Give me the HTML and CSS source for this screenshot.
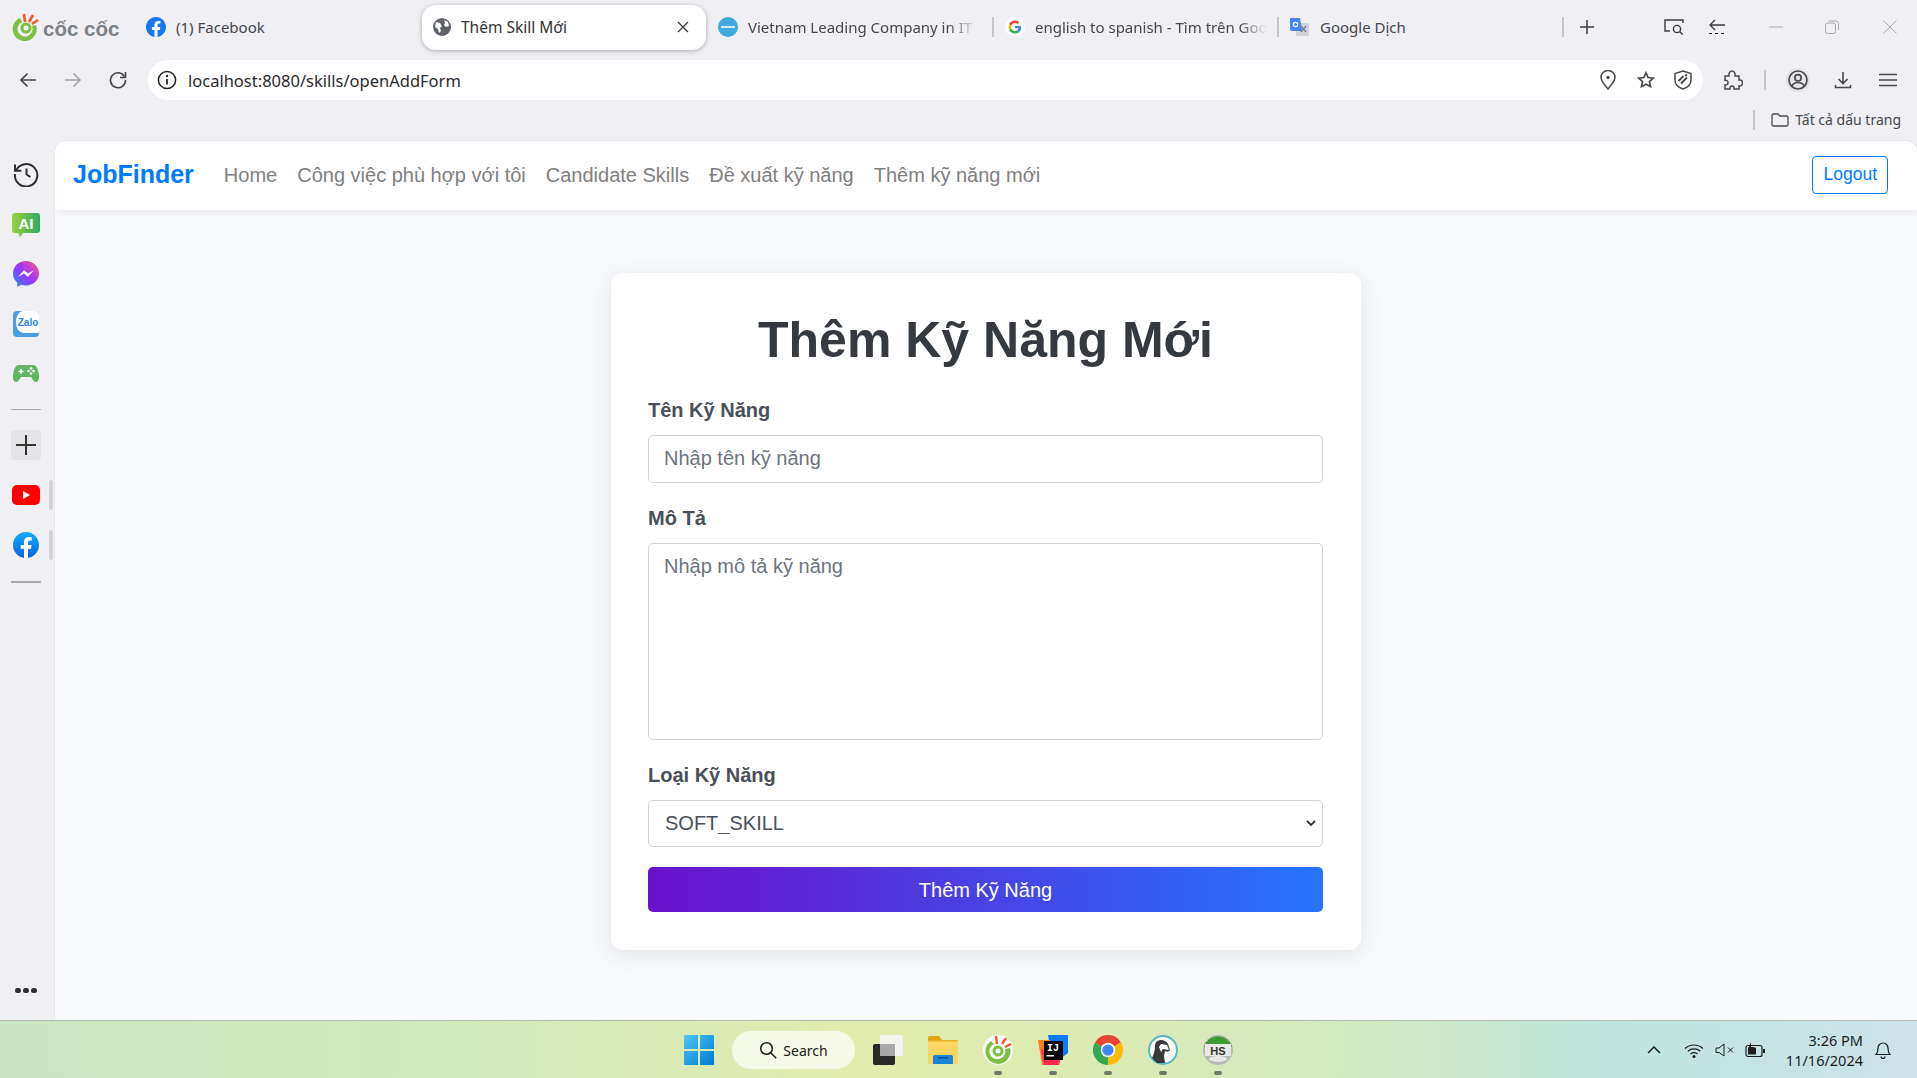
FILE: index.html
```html
<!DOCTYPE html>
<html lang="vi">
<head>
<meta charset="utf-8">
<title>Thêm Skill Mới</title>
<link rel="stylesheet" href="styles.css">
</head>
<body>
<div class="browser">
  <header class="tabstrip">
    <div class="brand">
      <svg width="28" height="28" viewBox="0 0 28 28"><path d="M8 5A12 12 0 1 0 24 12L20 13A7.6 7.6 0 1 1 10 9Z" fill="#7cc142"/><circle cx="14" cy="15" r="4" fill="none" stroke="#7cc142" stroke-width="3"/><path d="M13 9L12 1M17 9l4-7M20 11l6-4" stroke="#f4572a" stroke-width="2.6" fill="none"/></svg>
      <span class="brand-name">cốc cốc</span>
    </div>
    <div class="tab tab-fb">
      <svg width="20" height="20" viewBox="0 0 24 24"><circle cx="12" cy="12" r="11" fill="#fff"/><path fill="#1877f2" d="M24 12.07C24 5.4 18.63 0 12 0S0 5.4 0 12.07c0 6.03 4.39 11.02 10.13 11.93v-8.44H7.08v-3.49h3.05V9.41c0-3.02 1.79-4.69 4.53-4.69 1.31 0 2.69.24 2.69.24v2.97h-1.52c-1.49 0-1.96.93-1.96 1.89v2.25h3.33l-.53 3.49h-2.8V24C19.61 23.09 24 18.1 24 12.07z"/></svg>
      <span class="tab-title">(1) Facebook</span>
    </div>
    <div class="tab tab-active">
      <svg width="18" height="18" viewBox="0 0 18 18"><circle cx="9" cy="9" r="9" fill="#5f6368"/><path d="M3 4l4 1 2 3-2 2 1 3-2 2-1-4-3-2ZM11 2l4 2 1 4-3 1-2-2 1-2Z" fill="#fff"/></svg>
      <span class="tab-title tab-title-active">Thêm Skill Mới</span>
      <svg class="tab-x" width="12" height="12" viewBox="0 0 12 12"><path d="M1 1l10 10M11 1L1 11" stroke="#333" stroke-width="1.2"/></svg>
    </div>
    <div class="tab tab-vn">
      <svg width="20" height="20" viewBox="0 0 20 20"><circle cx="10" cy="10" r="10" fill="#3fa9e0"/><rect x="3" y="9" width="14" height="2" fill="#cfe8f6"/></svg>
      <span class="tab-title tab-fade tab-title-vn">Vietnam Leading Company in IT</span>
    </div>
    <i class="tab-sep"></i>
    <div class="tab tab-g">
      <svg width="20" height="20" viewBox="0 0 20 20"><circle cx="10" cy="10" r="10" fill="#fff"/><g transform="translate(3.5 3.5) scale(.27)"><path fill="#EA4335" d="M24 9.5c3.54 0 6.71 1.22 9.21 3.6l6.85-6.85C35.9 2.38 30.47 0 24 0 14.62 0 6.51 5.38 2.56 13.22l7.98 6.19C12.43 13.72 17.74 9.5 24 9.5z"/><path fill="#4285F4" d="M46.98 24.55c0-1.57-.15-3.09-.38-4.55H24v9.02h12.94c-.58 2.96-2.26 5.48-4.78 7.18l7.73 6c4.51-4.18 7.09-10.36 7.09-17.65z"/><path fill="#FBBC05" d="M10.53 28.59c-.48-1.45-.76-2.99-.76-4.59s.27-3.14.76-4.59l-7.98-6.19C.92 16.46 0 20.12 0 24c0 3.88.92 7.54 2.56 10.78l7.97-6.19z"/><path fill="#34A853" d="M24 48c6.48 0 11.93-2.13 15.89-5.81l-7.73-6c-2.15 1.45-4.92 2.3-8.16 2.3-6.26 0-11.57-4.22-13.47-9.91l-7.98 6.19C6.51 42.62 14.62 48 24 48z"/></g></svg>
      <span class="tab-title tab-fade tab-title-g">english to spanish - Tìm trên Google</span>
    </div>
    <i class="tab-sep"></i>
    <div class="tab tab-tr">
      <svg width="20" height="20" viewBox="0 0 20 20"><rect x="7" y="6" width="13" height="13" rx="1" fill="#d0d3d8"/><path d="M1 1h10l2 13H3a2 2 0 0 1-2-2Z" fill="#4285f4"/><path d="M12 9l5 6M17 9l-5 6" stroke="#7a7f85" stroke-width="1.2"/><circle cx="6.5" cy="7.5" r="2.2" fill="none" stroke="#fff" stroke-width="1.2"/></svg>
      <span class="tab-title">Google Dịch</span>
    </div>
    <i class="tab-sep tab-sep-end"></i>
    <svg class="plus" width="16" height="16" viewBox="0 0 16 16"><path d="M8 1v14M1 8h14" stroke="#3c3c3c" stroke-width="1.5"/></svg>
    <svg class="strip-search" width="20" height="16" viewBox="0 0 20 16"><path d="M6 12H1V1h18v3" fill="none" stroke="#3c3c3c" stroke-width="1.4"/><circle cx="13" cy="10" r="3.6" fill="none" stroke="#3c3c3c" stroke-width="1.4"/><path d="M15.6 12.6l3 3" stroke="#3c3c3c" stroke-width="1.4"/></svg>
    <svg class="strip-back" width="18" height="16" viewBox="0 0 18 16"><path d="M17 6H2M7 1L2 6l5 5" fill="none" stroke="#3c3c3c" stroke-width="1.3"/><path d="M1 14.500h16" stroke="#222" stroke-width="1.2" stroke-dasharray="3 3"/></svg>
    <svg class="win-min" width="14" height="2" viewBox="0 0 14 2"><path d="M0 1h14" stroke="#a8a8ad" stroke-width="1"/></svg>
    <svg class="win-max" width="14" height="14" viewBox="0 0 14 14"><rect x=".5" y="3" width="10" height="10.500" rx="2" fill="none" stroke="#a8a8ad"/><path d="M3.500 1H11a2.500 2.500 0 0 1 2.500 2.500V10" fill="none" stroke="#a8a8ad"/></svg>
    <svg class="win-close" width="14" height="14" viewBox="0 0 14 14"><path d="M.5.500l13 13M13.500.500l-13 13" stroke="#a8a8ad"/></svg>
  </header>

  <div class="toolbar">
    <svg class="nav-back" width="18" height="16" viewBox="0 0 18 16"><path d="M17 8H2M8.500 1.500L2 8l6.500 6.500" fill="none" stroke="#444" stroke-width="1.6"/></svg>
    <svg class="nav-fwd" width="18" height="16" viewBox="0 0 18 16"><path d="M1 8h15M9.500 1.500L16 8l-6.500 6.500" fill="none" stroke="#a2a2a6" stroke-width="1.6"/></svg>
    <svg class="nav-reload" width="18" height="18" viewBox="0 0 18 18"><path d="M15.500 5.500A7.500 7.500 0 1 0 16.500 9" fill="none" stroke="#444" stroke-width="1.6"/><path d="M16.500 1v5.500H11" fill="none" stroke="#444" stroke-width="1.6"/></svg>
    <div class="omnibox">
      <svg width="20" height="20" viewBox="0 0 20 20"><circle cx="10" cy="10" r="8.600" fill="none" stroke="#222" stroke-width="1.5"/><path d="M10 9v5.500" stroke="#222" stroke-width="1.800"/><circle cx="10" cy="6" r="1.200" fill="#222"/></svg>
      <span class="url">localhost:8080/skills/openAddForm</span>
      <svg class="omni-pin" width="16" height="20" viewBox="0 0 16 20"><path d="M8 19C4 14 1 11 1 7.500a7 7 0 0 1 14 0C15 11 12 14 8 19Z" fill="none" stroke="#4a4a4e" stroke-width="1.500"/><circle cx="8" cy="7.500" r="1.700" fill="#4a4a4e"/></svg>
      <svg class="omni-star" width="18" height="18" viewBox="0 0 18 18"><path d="M9 1.800l2.200 4.700 5.100.6-3.800 3.500 1 5.100L9 13.200l-4.500 2.500 1-5.100L1.700 7.100l5.100-.6Z" fill="none" stroke="#4a4a4e" stroke-width="1.700"/></svg>
      <svg class="omni-shield" width="18" height="20" viewBox="0 0 18 20"><path d="M9 1l8 2.500V10c0 4.500-3.500 7.500-8 9-4.500-1.500-8-4.500-8-9V3.500Z" fill="none" stroke="#4a4a4e" stroke-width="1.500"/><path d="M4.500 11l5-5M7 13.500l6-6M11 6l2-1.500" stroke="#4a4a4e" stroke-width="2"/></svg>
    </div>
    <svg class="tool-puzzle" width="20" height="20" viewBox="0 0 20 20"><path d="M2 6h4c-.5-3 1-5 3-5s3.500 2 3 5h4v4c3-.5 3.500 1.500 3.500 3s-1 3.500-3.500 3v3H11c.3-2-.6-3-2-3s-2.300 1-2 3H2v-4c2 .3 3-1 3-2.500S4 10 2 10.300Z" fill="none" stroke="#4a4a4e" stroke-width="1.500"/></svg>
    <i class="tool-sep"></i>
    <span class="tool-profile"><svg width="20" height="20" viewBox="0 0 20 20"><circle cx="10" cy="10" r="9" fill="none" stroke="#4a4a4e" stroke-width="1.700"/><circle cx="10" cy="7.800" r="3.200" fill="none" stroke="#4a4a4e" stroke-width="1.700"/><path d="M3.800 16c1.200-2.500 3.500-3.500 6.200-3.500s5 1 6.200 3.500" fill="none" stroke="#4a4a4e" stroke-width="1.700"/></svg></span>
    <svg class="tool-dl" width="18" height="18" viewBox="0 0 18 18"><path d="M9 1v11M4.500 8L9 12.500 13.500 8" fill="none" stroke="#4a4a4e" stroke-width="1.600"/><path d="M1.500 14v2.500h15V14" fill="none" stroke="#4a4a4e" stroke-width="1.600"/></svg>
    <svg class="tool-menu" width="18" height="14" viewBox="0 0 18 14"><path d="M0 1.500h18M0 7h18M0 12.500h18" stroke="#4a4a4e" stroke-width="1.600"/></svg>
  </div>

  <div class="bookmarks">
    <i class="bm-sep"></i>
    <svg width="18" height="14" viewBox="0 0 18 14"><path d="M1 2.500A1.500 1.500 0 0 1 2.500 1H7l2 2h6.500A1.500 1.500 0 0 1 17 4.500v7a1.500 1.500 0 0 1-1.500 1.500h-13A1.500 1.500 0 0 1 1 11.500Z" fill="none" stroke="#4a4a4e" stroke-width="1.300"/></svg>
    <span class="bm-text">Tất cả dấu trang</span>
  </div>

  <div class="workspace">
    <aside class="rail">
      <svg class="rail-history" width="26" height="26" viewBox="0 0 26 26"><path d="M3 9.500A11.200 11.200 0 1 1 2 13" fill="none" stroke="#2f2f2f" stroke-width="2"/><path d="M2 3.500v6.300h6.300" fill="none" stroke="#2f2f2f" stroke-width="2"/><path d="M13.500 7.500v6l4 2.500" fill="none" stroke="#2f2f2f" stroke-width="2"/></svg>
      <svg class="rail-ai" width="28" height="26" viewBox="0 0 28 26"><defs><linearGradient id="ai" x1="0" x2="1"><stop offset="0" stop-color="#9ccf3f"/><stop offset="1" stop-color="#30a864"/></linearGradient></defs><path d="M3 1h22a3 3 0 0 1 3 3v14a3 3 0 0 1-3 3H11l-3 4-2-4H3a3 3 0 0 1-3-3V4a3 3 0 0 1 3-3Z" fill="url(#ai)"/><text x="14" y="16.500" class="ai-text">AI</text></svg>
      <svg class="rail-msg" width="26" height="26" viewBox="0 0 26 26"><defs><linearGradient id="ms" x1="0" y1="1" x2="1" y2="0"><stop offset="0" stop-color="#1f8bff"/><stop offset=".5" stop-color="#a033ff"/><stop offset="1" stop-color="#ff5c7a"/></linearGradient></defs><path d="M13 0C5.800 0 0 5.400 0 12.500c0 3.800 1.600 7 4.300 9.200V26l4-2.200c1.500.4 3 .7 4.700.7 7.200 0 13-5.400 13-12S20.200 0 13 0Z" fill="url(#ms)"/><path d="M5 16l6-7 4 3.500 6-3.500-6 7-4-3.500Z" fill="#fff"/></svg>
      <svg class="rail-zalo" width="26" height="26" viewBox="0 0 26 26"><rect width="26" height="26" rx="4" fill="#4a9fe3"/><path d="M9 0h13a4 4 0 0 1 4 4v17a2 2 0 0 1-1 1H10l-2-1c-3-1-5-5-5-10C3 6 5 2 9 0Z" fill="#fff"/><text x="15" y="14.500" class="zalo-text">Zalo</text></svg>
      <svg class="rail-game" width="26" height="18" viewBox="0 0 26 18"><path d="M6 1h14c3 0 5 3 6 10 .5 4-1 7-3 7s-3-2-5-5H8c-2 3-3 5-5 5s-3.500-3-3-7C1 4 3 1 6 1Z" fill="#62b562"/><path d="M5.500 7.500h5M8 5v5" stroke="#fff" stroke-width="1.500"/><circle cx="18" cy="4.500" r="1.300" fill="#fff"/><circle cx="18" cy="9.500" r="1.300" fill="#fff"/><circle cx="15.500" cy="7" r="1.300" fill="#fff"/><circle cx="20.500" cy="7" r="1.300" fill="#fff"/></svg>
      <hr class="rail-hr">
      <div class="rail-plus"><svg width="20" height="20" viewBox="0 0 20 20"><path d="M10 0v20M0 10h20" stroke="#333" stroke-width="2"/></svg></div>
      <div class="rail-pinned">
        <svg width="28" height="20" viewBox="0 0 28 20"><rect width="28" height="20" rx="5" fill="#f00"/><path d="M11 6l7 4-7 4Z" fill="#fff"/></svg>
        <i class="rail-mark"></i>
      </div>
      <div class="rail-pinned">
        <svg width="26" height="26" viewBox="0 0 24 24"><defs><linearGradient id="fb" x1="0" y1="0" x2="0" y2="1"><stop offset="0" stop-color="#18acfe"/><stop offset="1" stop-color="#0163e0"/></linearGradient></defs><circle cx="12" cy="12" r="11" fill="#fff"/><path fill="url(#fb)" d="M24 12.070C24 5.400 18.630 0 12 0S0 5.400 0 12.070c0 6.030 4.390 11.020 10.130 11.930v-8.440H7.080v-3.490h3.050V9.410c0-3.020 1.790-4.690 4.530-4.690 1.310 0 2.690.24 2.690.24v2.970h-1.520c-1.490 0-1.960.93-1.960 1.890v2.250h3.330l-.53 3.490h-2.800V24C19.610 23.090 24 18.100 24 12.070z"/></svg>
        <i class="rail-mark"></i>
      </div>
      <hr class="rail-hr rail-hr-low">
      <div class="rail-dots"><i></i><i></i><i></i></div>
    </aside>

    <div class="page">
      <nav class="navbar">
        <a class="nav-brand">JobFinder</a>
        <a class="nav-link">Home</a>
        <a class="nav-link">Công việc phù hợp với tôi</a>
        <a class="nav-link">Candidate Skills</a>
        <a class="nav-link">Đề xuất kỹ năng</a>
        <a class="nav-link">Thêm kỹ năng mới</a>
        <button class="logout" type="button">Logout</button>
      </nav>
      <main class="content">
        <form class="card">
          <h1 class="card-title">Thêm Kỹ Năng Mới</h1>
          <label class="field-label">Tên Kỹ Năng</label>
          <input class="field field-input" type="text" placeholder="Nhập tên kỹ năng">
          <label class="field-label">Mô Tả</label>
          <textarea class="field field-area" placeholder="Nhập mô tả kỹ năng"></textarea>
          <label class="field-label">Loại Kỹ Năng</label>
          <div class="select-wrap">
            <select class="field field-select"><option>SOFT_SKILL</option></select>
            <svg class="select-chev" width="10" height="7" viewBox="0 0 10 7"><path d="M1 1l4 4 4-4" fill="none" stroke="#333" stroke-width="1.800"/></svg>
          </div>
          <button class="submit" type="button">Thêm Kỹ Năng</button>
        </form>
      </main>
    </div>
  </div>

  <footer class="taskbar">
    <svg class="tb-win" width="30" height="30" viewBox="0 0 30 30"><defs><linearGradient id="w" x1="0" y1="0" x2="1" y2="1"><stop offset="0" stop-color="#4cc8f5"/><stop offset="1" stop-color="#0078d4"/></linearGradient></defs><path d="M0 1a1 1 0 0 1 1-1h13v14H0ZM16 0h13a1 1 0 0 1 1 1v13H16ZM0 16h14v14H1a1 1 0 0 1-1-1ZM16 16h14v13a1 1 0 0 1-1 1H16Z" fill="url(#w)"/></svg>
    <div class="tb-search">
      <svg width="18" height="18" viewBox="0 0 18 18"><circle cx="7.500" cy="7.500" r="5.800" fill="none" stroke="#1c1c1c" stroke-width="1.500"/><path d="M11.700 11.700l5.500 5.500" stroke="#1c1c1c" stroke-width="1.500"/></svg>
      <span>Search</span>
    </div>
    <svg class="tb-app tb-task" width="30" height="30" viewBox="0 0 30 30"><rect x="0" y="9" width="22" height="21" rx="2" fill="#2a2a2a"/><rect x="7" y="0" width="23" height="21" rx="2" fill="#f5f5f5" fill-opacity=".9"/><rect x="7" y="9" width="15" height="12" fill="#a9a9a9"/></svg>
    <svg class="tb-app" width="30" height="28" viewBox="0 0 30 28"><path d="M0 2a2 2 0 0 1 2-2h9l3 4H0Z" fill="#e3a50c"/><rect y="4" width="30" height="24" rx="1" fill="#fcd663"/><rect y="4" width="30" height="1.500" fill="#e8b325"/><path d="M5 28v-7a2 2 0 0 1 2-2h16a2 2 0 0 1 2 2v7Z" fill="#1a84d8"/><rect x="10" y="21" width="10" height="1.500" fill="#0a4f8f"/></svg>
    <div class="tb-running">
      <svg width="30" height="30" viewBox="0 0 30 30"><circle cx="15" cy="15" r="15" fill="#fff"/><path d="M8 6A12.500 12.500 0 1 0 27 13L22 14A8 8 0 1 1 11 9Z" fill="#7cc142"/><circle cx="15" cy="16" r="4" fill="none" stroke="#7cc142" stroke-width="3"/><path d="M14 9l-1-8M19 9l4-6M22 12l6-3" stroke="#f4572a" stroke-width="2.400"/></svg>
      <i class="tb-dot"></i>
    </div>
    <div class="tb-running">
      <svg width="30" height="30" viewBox="0 0 30 30"><path d="M10 0h20v18l-8 6H14Z" fill="#087cfa"/><path d="M0 5h12v25H4Z" fill="#fc801d"/><path d="M3 14l20 8-2 8H6Z" fill="#fe2857"/><rect x="6" y="6" width="19" height="19" fill="#000"/><text x="9" y="16" class="ij-text">IJ</text><rect x="8.500" y="20" width="7.500" height="1.500" fill="#fff"/></svg>
      <i class="tb-dot"></i>
    </div>
    <div class="tb-running">
      <svg width="30" height="30" viewBox="0 0 24 24"><path d="M12 12L1.600 6A12 12 0 0 1 22.400 6Z" fill="#ea4335"/><path d="M12 12L1.600 6A12 12 0 0 0 12 24Z" fill="#34a853"/><path d="M12 12L12 24A12 12 0 0 0 22.400 6Z" fill="#fbbc05"/><circle cx="12" cy="12" r="5.800" fill="#fff"/><circle cx="12" cy="12" r="4.500" fill="#4285f4"/></svg>
      <i class="tb-dot"></i>
    </div>
    <div class="tb-running">
      <svg width="30" height="30" viewBox="0 0 30 30"><circle cx="15" cy="15" r="14" fill="#fff" stroke="#55b7c4" stroke-width="2"/><path d="M4 23c2-4 3-8 3-12 0-4 3-6 6-6 3 0 5 1 7 4l2 6c-1 2-3 2-5 1l-1 5 1 7-8 0Z" fill="#3a3a3c"/><path d="M13 9l6 1 2 5-6-1-2 3-2-5Z" fill="#fff"/></svg>
      <i class="tb-dot"></i>
    </div>
    <div class="tb-running">
      <svg width="30" height="30" viewBox="0 0 30 30"><circle cx="15" cy="15" r="15" fill="#b5b8b3"/><path d="M1 12A14.500 14.500 0 0 1 29 12Z" fill="#3f9b35"/><rect x="2" y="9" width="26" height="12" fill="#e8e8e4"/><ellipse cx="15" cy="24" rx="9" ry="3" fill="#e8e8e4"/><text x="15" y="19.500" class="hs-text">HS</text></svg>
      <i class="tb-dot"></i>
    </div>

    <div class="tray">
      <svg class="tray-chev" width="14" height="8" viewBox="0 0 14 8"><path d="M1 7l6-6 6 6" fill="none" stroke="#1c1c1c" stroke-width="1.500"/></svg>
      <svg class="tray-wifi" width="20" height="15" viewBox="0 0 20 15"><path d="M1 5.500C6 .8 14 .8 19 5.500M3.800 8.200c3.500-3 9-3 12.400 0M6.500 11c2-1.500 5-1.500 7 0" fill="none" stroke="#1c1c1c" stroke-width="1.200"/><circle cx="10" cy="13.500" r="1.500" fill="#1c1c1c"/></svg>
      <svg class="tray-vol" width="19" height="14" viewBox="0 0 19 14"><path d="M1 5h3l5-4v12L4 9.500H1Z" fill="none" stroke="#1c1c1c"/><path d="M13 4.500l5 5M18 4.500l-5 5" stroke="#1c1c1c"/></svg>
      <svg class="tray-bat" width="20" height="16" viewBox="0 0 20 16"><rect x="1" y="3.500" width="16" height="11" rx="2" fill="none" stroke="#1c1c1c" stroke-width="1.200"/><rect x="3" y="5.500" width="8" height="7" fill="#1c1c1c"/><rect x="18" y="7" width="2" height="4" fill="#1c1c1c"/><path d="M6 0L3 7h3l-1 5 4-7H6Z" fill="#1c1c1c"/></svg>
      <div class="clock"><span>3:26 PM</span><span>11/16/2024</span></div>
      <svg class="tray-bell" width="16" height="18" viewBox="0 0 16 18"><path d="M1 13.500c1.500-1.500 2-3 2-6.500a5 5 0 0 1 10 0c0 3.500.5 5 2 6.500Z" fill="none" stroke="#1c1c1c" stroke-width="1.200"/><path d="M6 15.500a2 2 0 0 0 4 0" fill="none" stroke="#1c1c1c" stroke-width="1.200"/></svg>
    </div>
  </footer>
</div>
</body>
</html>
```

FILE: styles.css
```css
* { box-sizing: border-box; }
html, body { margin: 0; height: 100%; overflow: hidden; }
body { font-family: "Liberation Sans", Arial, sans-serif; background: #efeff4; }
svg { display: block; flex: none; }
i { display: block; }

.browser { display: flex; flex-direction: column; height: 1078px; }

/* tab strip */
.tabstrip { display: flex; align-items: center; height: 60px; flex: none; padding: 0 0 6px 12px; font-family: "Noto Sans", "Open Sans", sans-serif; }
.brand { display: flex; align-items: center; gap: 3px; width: 134px; }
.brand-name { font-family: "Liberation Sans", sans-serif; font-weight: 700; font-size: 20.500px; color: #7d8185; padding-top: 3px; white-space: nowrap; }
.tab { display: flex; align-items: center; flex: none; gap: 10px; font-size: 15px; color: #45474b; }
.tab-title { white-space: nowrap; }
.tab-fb { width: 276px; }
.tab-active { width: 284px; height: 45px; padding: 0 17px 0 11px; background: #fff; border-radius: 14px; box-shadow: 0 1px 5px rgba(0,0,0,.28); color: #333; font-size: 15.500px; }
.tab-title-active { flex: 1; }
.tab-vn { width: 274px; margin-left: 12px; }
.tab-fade { overflow: hidden; -webkit-mask-image: linear-gradient(to right, #000 88%, transparent); mask-image: linear-gradient(to right, #000 88%, transparent); }
.tab-title-vn { width: 228px; }
.tab-sep { width: 2px; height: 20px; background: #c5c5ca; flex: none; }
.tab-g { width: 271.500px; margin-left: 11px; }
.tab-title-g { width: 232px; }
.tab-tr { width: 273px; margin-left: 10.500px; gap: 11px; }
.plus { margin-left: 15px; }
.strip-search { margin-left: 69px; }
.strip-back { margin-left: 24px; }
.win-min { margin-left: 42.500px; }
.win-max { margin-left: 42px; }
.win-close { margin-left: 44px; }

/* toolbar */
.toolbar { display: flex; align-items: center; height: 40px; flex: none; padding-left: 19px; }
.nav-fwd { margin-left: 27px; }
.nav-reload { margin-left: 27px; }
.omnibox { display: flex; align-items: center; width: 1555px; height: 40px; margin-left: 21px; padding-left: 9px; background: #fff; border-radius: 20px; }
.url { margin-left: 11px; font-family: "Noto Sans", "Open Sans", sans-serif; font-size: 16.500px; color: #2b2b2f; white-space: nowrap; }
.omni-pin { margin-left: auto; }
.omni-star { margin-left: 21px; }
.omni-shield { margin-left: 19px; margin-right: 11px; }
.tool-puzzle { margin-left: 20px; }
.tool-sep { width: 2px; height: 20px; margin-left: 21px; background: #c5c5ca; }
.tool-profile { display: flex; align-items: center; justify-content: center; width: 24px; height: 24px; margin-left: 20px; background: #e3e3e8; border-radius: 50%; }
.tool-dl { margin-left: 24px; }
.tool-menu { margin-left: 27px; }

/* bookmarks */
.bookmarks { display: flex; align-items: center; justify-content: flex-end; height: 41px; flex: none; padding: 0 16px 2px 0; font-family: "Noto Sans", "Open Sans", sans-serif; }
.bm-sep { width: 2px; height: 20px; margin-right: 16px; background: #c5c5ca; }
.bm-text { margin-left: 6px; font-size: 14px; color: #45474b; white-space: nowrap; }

/* workspace */
.workspace { display: flex; flex: 1; min-height: 0; }
.rail { position: relative; display: flex; flex-direction: column; align-items: center; width: 55px; flex: none; padding-top: 20px; padding-right: 4px; }
.rail-history { margin-bottom: 25px; }
.rail-ai { margin-bottom: 23px; }
.rail-msg { margin-bottom: 24px; }
.rail-zalo { margin-bottom: 27px; }
.rail-game { margin-bottom: 27px; }
.ai-text { font: 700 15px "Liberation Sans", sans-serif; fill: #fff; text-anchor: middle; }
.zalo-text { font: 700 10px "Liberation Sans", sans-serif; fill: #2f86d6; text-anchor: middle; }
.rail-hr { width: 30px; margin: 0; border: 0; border-top: 1px solid #a9a9ad; }
.rail-hr-low { margin-top: 21px; border-top-width: 2px; }
.rail-plus { display: flex; align-items: center; justify-content: center; width: 30px; height: 30px; margin-top: 20px; background: #e4e4e6; border-radius: 4px; }
.rail-pinned { position: relative; display: flex; align-items: center; justify-content: center; width: 30px; height: 30px; margin-top: 20px; }
.rail-mark { position: absolute; left: 38px; top: 0; width: 4px; height: 30px; background: #d3d3d6; border-radius: 2px; }
.rail-dots { position: absolute; left: 15px; bottom: 27px; display: flex; gap: 2.500px; }
.rail-dots i { width: 5.500px; height: 5.500px; background: #2f2f2f; border-radius: 50%; }

/* page */
.page { display: flex; flex-direction: column; flex: 1; min-width: 0; background: #f8f9fd; border-top-left-radius: 10px; border-top-right-radius: 10px; overflow: hidden; box-shadow: 0 0 1px rgba(0,0,0,.3); }
.navbar { display: flex; align-items: center; height: 69px; flex: none; padding: 0 29px 0 18px; background: #fff; box-shadow: 0 2px 8px rgba(0,0,0,.07); position: relative; }
.nav-brand { margin: 0 20px 2px 0; font-size: 25px; font-weight: 700; color: #007bff; }
.nav-link { padding: 0 10px; font-size: 20px; color: #808080; white-space: nowrap; }
.logout { height: 38px; margin: 0 0 2px auto; padding: 0 10px; background: #fff; border: 1px solid #007bff; border-radius: 4px; color: #007bff; font: 17.500px "Liberation Sans", sans-serif; }
.content { display: flex; justify-content: center; flex: 1; padding-top: 63px; }
.card { display: flex; flex-direction: column; width: 750px; height: 677px; padding: 38px 38px 37px 37px; background: #fff; border-radius: 12px; box-shadow: 0 5px 25px rgba(0,0,0,.09); }
.card-title { margin: 0 0 26px; font-size: 50px; line-height: 58px; font-weight: 700; color: #343a40; text-align: center; }
.field-label { height: 30px; margin-bottom: 10px; font-size: 20px; line-height: 30px; font-weight: 700; color: #495057; }
.field { display: block; width: 100%; background: #fff; border: 1.500px solid #ced4da; border-radius: 5px; font: 20px "Liberation Sans", sans-serif; color: #495057; margin-bottom: 20px; outline: 0; }
.field::placeholder { color: #6c757d; opacity: 1; }
.field-input { height: 48px; padding: 0 15px 2px; }
.field-area { height: 197px; padding: 11px 15px; resize: none; }
.select-wrap { position: relative; }
.field-select { height: 47px; padding: 0 16px 2px; -webkit-appearance: none; appearance: none; }
.select-chev { position: absolute; right: 7px; top: 20px; }
.submit { height: 45px; width: 100%; padding: 2px 0 0; border: 0; border-radius: 5px; background: linear-gradient(90deg, #6a11cb, #2575fc); color: #fff; font: 20px "Liberation Sans", sans-serif; }

/* taskbar */
.taskbar { display: flex; align-items: center; height: 58px; flex: none; padding: 1px 0 0 684px; border-top: 1px solid #b3bcae; background: linear-gradient(90deg, #cbe6c4 0%, #d2e8bd 25%, #e2ecad 45%, #dcebb4 58%, #d0e8c4 72%, #bfe5df 84%, #cde2e9 100%); font-family: "Noto Sans", "Open Sans", sans-serif; }
.tb-search { display: flex; align-items: center; justify-content: center; gap: 6px; width: 123px; height: 38px; margin-left: 18px; background: rgba(255,255,255,.7); border-radius: 19px; font-size: 14px; color: #1c1c1c; }
.tb-app { margin-left: 25px; }
.tb-task { margin-left: 18px; }
.tb-running { position: relative; width: 30px; height: 30px; margin-left: 25px; }
.tb-dot { position: absolute; left: 11px; top: 36px; width: 8px; height: 4px; background: #6f7a68; border-radius: 2px; }
.ij-text { font: 700 10px "Liberation Mono", monospace; fill: #fff; }
.hs-text { font: 700 11px "Liberation Sans", sans-serif; fill: #333; text-anchor: middle; }
.tray { display: flex; align-items: center; margin-left: auto; padding-right: 26px; }
.tray-wifi { margin-left: 23px; }
.tray-vol { margin-left: 11px; }
.tray-bat { margin-left: 11px; }
.clock { display: flex; flex-direction: column; align-items: flex-end; margin-left: 21px; font-size: 14.500px; line-height: 20px; color: #1c1c1c; }
.tray-bell { margin-left: 12px; }
```
